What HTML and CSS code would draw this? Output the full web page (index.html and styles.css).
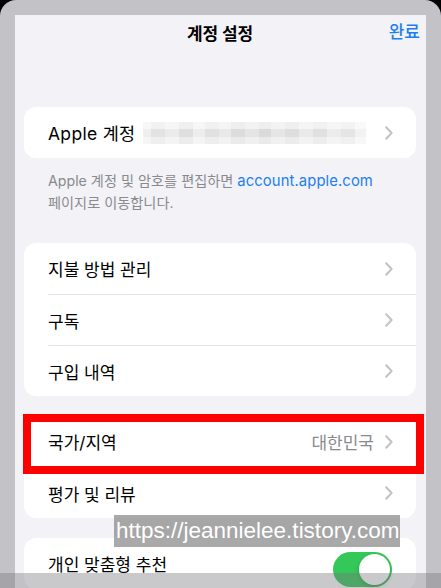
FILE: index.html
```html
<!DOCTYPE html>
<html lang="ko">
<head>
  <meta charset="UTF-8">
  <meta name="viewport" content="width=device-width, initial-scale=1.0">
  <title>계정 설정</title>
  <link rel="stylesheet" href="styles.css">
</head>
<body>
  <div class="frame">
    <div class="sheet">
      <div class="nav">
        <div class="nav-title">계정 설정</div>
        <div class="nav-done">완료</div>
      </div>

      <div class="card card-first">
        <div class="row">
          <div class="row-inner">
            <span class="label apple">Apple 계정</span>
            <span class="mosaic"></span>
            <svg class="chevron" width="8" height="14" viewBox="0 0 8 14"><path d="M1.2 1.2L6.6 7L1.2 12.8" fill="none" stroke="#c3c3c7" stroke-width="2" stroke-linecap="round" stroke-linejoin="round"/></svg>
          </div>
        </div>
      </div>
      <p class="footnote">Apple 계정 및 암호를 편집하면 <span class="link">account.apple.com</span><br>페이지로 이동합니다.</p>

      <div class="card card-pay">
        <div class="row">
          <div class="row-inner">
            <span class="label">지불 방법 관리</span>
            <svg class="chevron" width="8" height="14" viewBox="0 0 8 14"><path d="M1.2 1.2L6.6 7L1.2 12.8" fill="none" stroke="#c3c3c7" stroke-width="2" stroke-linecap="round" stroke-linejoin="round"/></svg>
          </div>
        </div>
        <div class="row">
          <div class="row-inner line">
            <span class="label">구독</span>
            <svg class="chevron" width="8" height="14" viewBox="0 0 8 14"><path d="M1.2 1.2L6.6 7L1.2 12.8" fill="none" stroke="#c3c3c7" stroke-width="2" stroke-linecap="round" stroke-linejoin="round"/></svg>
          </div>
        </div>
        <div class="row">
          <div class="row-inner line">
            <span class="label">구입 내역</span>
            <svg class="chevron" width="8" height="14" viewBox="0 0 8 14"><path d="M1.2 1.2L6.6 7L1.2 12.8" fill="none" stroke="#c3c3c7" stroke-width="2" stroke-linecap="round" stroke-linejoin="round"/></svg>
          </div>
        </div>
      </div>

      <div class="card card-region">
        <div class="row">
          <div class="row-inner">
            <span class="label">국가/지역</span>
            <span class="value">대한민국</span>
            <svg class="chevron" width="8" height="14" viewBox="0 0 8 14"><path d="M1.2 1.2L6.6 7L1.2 12.8" fill="none" stroke="#c3c3c7" stroke-width="2" stroke-linecap="round" stroke-linejoin="round"/></svg>
          </div>
        </div>
        <div class="row">
          <div class="row-inner line">
            <span class="label">평가 및 리뷰</span>
            <svg class="chevron" width="8" height="14" viewBox="0 0 8 14"><path d="M1.2 1.2L6.6 7L1.2 12.8" fill="none" stroke="#c3c3c7" stroke-width="2" stroke-linecap="round" stroke-linejoin="round"/></svg>
          </div>
        </div>
        <!-- red highlight box over the first row -->
        <div class="highlight"></div>
      </div>

      <div class="card card-last">
        <div class="row">
          <div class="row-inner">
            <span class="label">개인 맞춤형 추천</span>
            <span class="toggle"><span class="knob"></span></span>
          </div>
        </div>
      </div>

      <div class="watermark">https://jeannielee.tistory.com</div>
    </div>
    <div class="dim"></div>
  </div>
</body>
</html>
```
FILE: styles.css
```css
html, body {
  margin: 0;
  padding: 0;
  background-color: #000;
}

body {
  width: 441px;
  height: 588px;
  overflow: hidden;
  font-family: Inter, "Noto Sans CJK KR", sans-serif;
  color: #000;
}

.frame {
  position: relative;
  height: 588px;
  background-color: #c3c2c7;
  border-radius: 16px 16px 0 0;
  padding: 15px 15px 0;
  box-sizing: border-box;
  overflow: hidden;
}

.sheet {
  position: relative;
  background-color: #f2f2f7;
  height: 573px;
  padding: 0 10px 0 9px;
  overflow: hidden;
}

.nav {
  display: flex;
  align-items: center;
  justify-content: center;
  height: 35px;
  position: relative;
}

.nav-title {
  font-size: 17px;
  font-weight: 600;
  letter-spacing: -0.2px;
}

.nav-done {
  position: absolute;
  right: -4px;
  top: 0;
  line-height: 35px;
  font-size: 17px;
  font-weight: 500;
  color: #1c7ef0;
}

.card {
  position: relative;
  background-color: #fff;
  border-radius: 12px;
}

.card-first {
  margin-top: 57px;
}

.card-pay {
  margin-top: 29px;
}

.card-region {
  margin-top: 20px;
}

.card-last {
  margin-top: 20px;
}

.row {
  padding-left: 24px;
}

.row-inner {
  display: flex;
  align-items: center;
  height: 51px;
  padding-right: 23px;
  box-sizing: border-box;
}

.row-inner.line {
  border-top: 1px solid #e5e5ea;
}

.label {
  font-size: 17px;
  white-space: nowrap;
}

.label.apple {
  font-size: 17.5px;
  letter-spacing: 0.3px;
}

.value {
  margin-left: auto;
  margin-right: 11px;
  font-size: 17px;
  color: #8a8a8e;
}

.chevron {
  margin-left: auto;
  flex-shrink: 0;
}

.value + .chevron {
  margin-left: 0;
}

.mosaic {
  width: 223px;
  height: 22px;
  margin-left: 8px;
  background:
    linear-gradient(180deg, rgba(255,255,255,0.6) 0, rgba(255,255,255,0.6) 30%, rgba(255,255,255,0.15) 30%, rgba(255,255,255,0.15) 70%, rgba(255,255,255,0.5) 70%),
    linear-gradient(90deg,
      #ececec 0, #ececec 8px, #dedede 8px, #dedede 22px, #e8e8e8 22px, #e8e8e8 36px,
      #d9d9d9 36px, #d9d9d9 50px, #eaeaea 50px, #eaeaea 62px, #dcdcdc 62px, #dcdcdc 76px,
      #e5e5e5 76px, #e5e5e5 88px, #d6d6d6 88px, #d6d6d6 102px, #e0e0e0 102px, #e0e0e0 116px,
      #d4d4d4 116px, #d4d4d4 128px, #e2e2e2 128px, #e2e2e2 142px, #d8d8d8 142px, #d8d8d8 156px,
      #e6e6e6 156px, #e6e6e6 170px, #dbdbdb 170px, #dbdbdb 184px, #e9e9e9 184px, #e9e9e9 198px,
      #e1e1e1 198px, #e1e1e1 212px, #f0f0f0 212px);
}

.footnote {
  margin: 0;
  padding: 12px 24px 0;
  font-size: 14.2px;
  line-height: 22px;
  color: #8a8a8e;
  white-space: nowrap;
}

.link {
  color: #1c7ef0;
  font-size: 14.8px;
  letter-spacing: 0.1px;
}

.highlight {
  position: absolute;
  left: -1px;
  right: -8px;
  top: -2px;
  height: 60px;
  border: 8px solid #ff0000;
  box-sizing: border-box;
}

.toggle {
  position: relative;
  margin-left: auto;
  margin-right: 1px;
  margin-top: 11px;
  width: 59px;
  height: 35px;
  border-radius: 18px;
  background-color: #34c759;
  flex-shrink: 0;
}

.knob {
  position: absolute;
  right: 2px;
  top: 2px;
  width: 31px;
  height: 31px;
  border-radius: 50%;
  background-color: #fff;
  box-shadow: 0 2px 4px rgba(0, 0, 0, 0.2);
}

.watermark {
  position: absolute;
  left: 99px;
  top: 500px;
  width: 286px;
  height: 32px;
  padding-left: 2px;
  box-sizing: border-box;
  background-color: rgba(140, 140, 140, 0.75);
  color: #fff;
  font-family: "Liberation Sans", sans-serif;
  font-size: 22.5px;
  line-height: 32px;
  white-space: nowrap;
  overflow: hidden;
}

.dim {
  position: absolute;
  left: 0;
  right: 0;
  bottom: 0;
  height: 15px;
  background-color: rgba(120, 120, 125, 0.4);
}
```
